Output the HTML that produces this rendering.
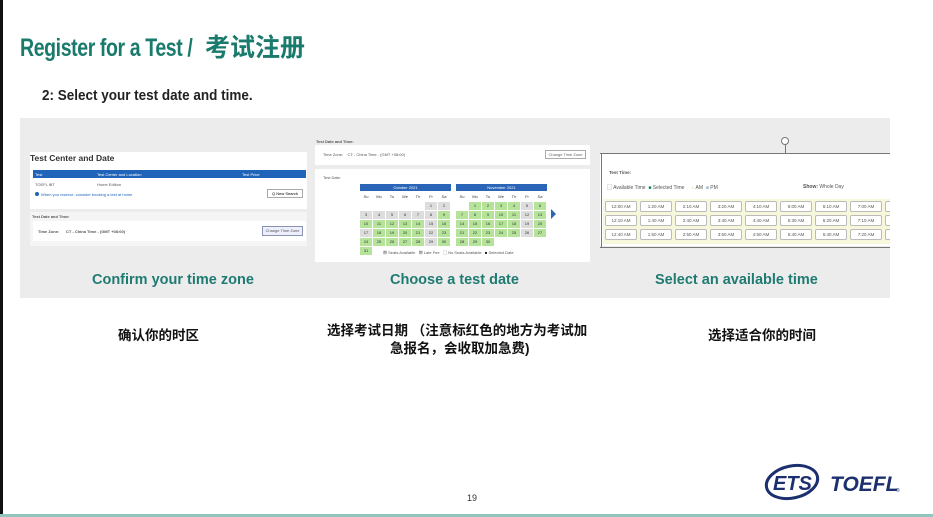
<!DOCTYPE html>
<html><head><meta charset="utf-8"><style>
*{margin:0;padding:0;box-sizing:border-box}
body{width:933px;height:517px;background:#fff;position:relative;overflow:hidden;font-family:"Liberation Sans","Noto Sans CJK SC",sans-serif}
.a{position:absolute}
.title{left:20px;top:28px;color:#1a7a6c;font-weight:bold;font-size:25px;white-space:nowrap}
.title .l{display:inline-block;transform:scaleX(.78);transform-origin:left;width:183px;letter-spacing:-.5px}
.sub{left:42px;top:88px;font-size:14.5px;font-weight:bold;color:#222;transform:scaleX(.93);transform-origin:left;white-space:nowrap}
.panel{left:20px;top:118px;width:870px;height:180px;background:#ececec}
.cap{top:272px;color:#1f7b72;font-weight:bold;font-size:14.5px;white-space:nowrap}
.cn{font-size:13.5px;color:#111;font-weight:bold;white-space:nowrap}
.w{background:#fff}
.tiny{font-size:4px;color:#555;white-space:nowrap}
.cal{display:grid;grid-template-columns:repeat(7,12px);gap:1px}
.cal div{height:8px;font-size:4px;text-align:center;line-height:8px;color:#333}
.g{background:#b5e39a}.y{background:#ddd}.e{background:#fff}
.tb{width:32px;height:11px;border:1px solid #bbb;border-radius:2px;background:#fff;font-size:4.5px;text-align:center;line-height:9px;color:#555}
</style></head><body>
<div class="a" style="left:0;top:0;width:3px;height:517px;background:#111"></div>
<div class="a title"><span class="l">Register for a Test /</span><span style="margin-left:2px">考试注册</span></div>
<div class="a sub">2: Select your test date and time.</div>
<div class="a panel"></div>

<!-- panel1 -->
<div class="a w" style="left:30px;top:152px;width:277px;height:57px"></div>
<div class="a" style="left:30px;top:153px;font-size:8.5px;font-weight:bold;color:#333">Test Center and Date</div>
<div class="a" style="left:33px;top:170px;width:273px;height:8px;background:#1f64b8"></div>
<div class="a tiny" style="left:35px;top:172px;color:#fff">Test</div>
<div class="a tiny" style="left:97px;top:172px;color:#fff">Test Center and Location</div>
<div class="a tiny" style="left:242px;top:172px;color:#fff">Test Price</div>
<div class="a tiny" style="left:35px;top:182px">TOEFL iBT</div>
<div class="a tiny" style="left:97px;top:182px">Home Edition</div>
<div class="a" style="left:35px;top:192px;width:4px;height:4px;border-radius:50%;background:#1f64b8"></div>
<div class="a tiny" style="left:41px;top:192px;color:#1f64b8">When you reserve, consider booking a test at home</div>
<div class="a w" style="left:267px;top:189px;width:36px;height:9px;border:1px solid #aaa;font-size:4px;text-align:center;line-height:7px">Q New Search</div>
<div class="a" style="left:30px;top:212px;width:277px;height:34px;background:#f5f5f5"></div>
<div class="a tiny" style="left:32px;top:214px;font-weight:bold">Test Date and Time:</div>
<div class="a w" style="left:33px;top:221px;width:273px;height:20px"></div>
<div class="a tiny" style="left:38px;top:229px;font-weight:bold">Time Zone:&nbsp;&nbsp;&nbsp;&nbsp;&nbsp; CT - China Time - (GMT +08:00)</div>
<div class="a" style="left:262px;top:226px;width:41px;height:10px;border:1px solid #8893b0;background:#eef;font-size:4px;text-align:center;line-height:8px;color:#555">Change Time Zone</div>
<div class="a cap" style="left:92px">Confirm your time zone</div>

<!-- panel2 -->
<div class="a tiny" style="left:316px;top:139px;font-weight:bold">Test Date and Time:</div>
<div class="a w" style="left:315px;top:145px;width:275px;height:20px"></div>
<div class="a tiny" style="left:323px;top:152px">Time Zone:&nbsp;&nbsp;&nbsp; CT - China Time - (GMT +08:00)</div>
<div class="a w" style="left:545px;top:150px;width:41px;height:9px;border:1px solid #aaa;font-size:4px;text-align:center;line-height:7px;color:#666">Change Time Zone</div>
<div class="a w" style="left:315px;top:169px;width:275px;height:93px"></div>
<div class="a tiny" style="left:323px;top:175px">Test Date:</div>
<div class="a" style="left:360px;top:184px;width:91px;height:7px;background:#2a65b8;color:#fff;font-size:4px;text-align:center;line-height:7px">October 2021</div>
<div class="a" style="left:456px;top:184px;width:91px;height:7px;background:#2a65b8;color:#fff;font-size:4px;text-align:center;line-height:7px">November 2021</div>
<div class="a cal" style="left:360px;top:193px">
<div>Su</div><div>Mo</div><div>Tu</div><div>We</div><div>Th</div><div>Fr</div><div>Sa</div>
<div class="e"></div><div class="e"></div><div class="e"></div><div class="e"></div><div class="e"></div><div class="y">1</div><div class="y">2</div>
<div class="y">3</div><div class="y">4</div><div class="y">5</div><div class="y">6</div><div class="y">7</div><div class="y">8</div><div class="g">9</div>
<div class="g">10</div><div class="g">11</div><div class="g">12</div><div class="g">13</div><div class="g">14</div><div class="y">15</div><div class="g">16</div>
<div class="y">17</div><div class="g">18</div><div class="g">19</div><div class="g">20</div><div class="g">21</div><div class="y">22</div><div class="g">23</div>
<div class="g">24</div><div class="g">25</div><div class="g">26</div><div class="g">27</div><div class="g">28</div><div class="y">29</div><div class="g">30</div>
<div class="g">31</div>
</div>
<div class="a cal" style="left:456px;top:193px">
<div>Su</div><div>Mo</div><div>Tu</div><div>We</div><div>Th</div><div>Fr</div><div>Sa</div>
<div class="e"></div><div class="g">1</div><div class="g">2</div><div class="g">3</div><div class="g">4</div><div class="y">5</div><div class="g">6</div>
<div class="g">7</div><div class="g">8</div><div class="g">9</div><div class="g">10</div><div class="g">11</div><div class="y">12</div><div class="g">13</div>
<div class="g">14</div><div class="g">15</div><div class="g">16</div><div class="g">17</div><div class="g">18</div><div class="y">19</div><div class="g">20</div>
<div class="g">21</div><div class="g">22</div><div class="g">23</div><div class="g">24</div><div class="g">25</div><div class="y">26</div><div class="g">27</div>
<div class="g">28</div><div class="g">29</div><div class="g">30</div>
</div>
<div class="a" style="left:551px;top:209px;width:0;height:0;border-left:5px solid #2a65b8;border-top:5px solid transparent;border-bottom:5px solid transparent"></div>
<div class="a tiny" style="left:383px;top:250px">▩ Seats Available&nbsp;&nbsp; ▩ Late Fee&nbsp;&nbsp; ▢ No Seats Available&nbsp;&nbsp; <span style="color:#113">■</span> Selected Date</div>
<div class="a cap" style="left:390px">Choose a test date</div>

<!-- panel3 -->
<div class="a w" style="left:600px;top:154px;width:290px;height:92px"></div>
<div class="a" style="left:600px;top:153px;width:290px;height:1px;background:#777"></div>
<div class="a" style="left:600px;top:247px;width:290px;height:1px;background:#777"></div>
<div class="a" style="left:601px;top:154px;width:1px;height:93px;background:#777"></div>
<div class="a" style="left:785px;top:140px;width:1px;height:13px;background:#777"></div>
<div class="a" style="left:781px;top:137px;width:8px;height:8px;border:1px solid #777;border-radius:50%;background:#fff"></div>
<div class="a tiny" style="left:609px;top:170px;font-size:4.5px;font-weight:bold">Test Time:</div>
<div class="a tiny" style="left:607px;top:184px;font-size:5px">▢ Available Time&nbsp;&nbsp;<span style="color:#0a7a68">■</span> Selected Time&nbsp;&nbsp;&nbsp;&nbsp;&nbsp;<span style="color:#f4f4d8">■</span> AM&nbsp;&nbsp;<span style="color:#9fb0dc">■</span> PM</div>
<div class="a tiny" style="left:803px;top:184px;font-size:5px"><b>Show:</b> Whole Day</div>
<div class="a" style="left:603px;top:199px;width:287px;height:45px;background:#f7f7dc"></div>
<div class="a" style="left:605px;top:201px;display:grid;grid-template-columns:repeat(9,32px);gap:3px 3px;width:285px;overflow:hidden">
<div class="tb">12:00 AM</div><div class="tb">1:20 AM</div><div class="tb">2:10 AM</div><div class="tb">3:20 AM</div><div class="tb">4:10 AM</div><div class="tb">5:00 AM</div><div class="tb">6:10 AM</div><div class="tb">7:00 AM</div><div class="tb">8</div>
<div class="tb">12:10 AM</div><div class="tb">1:40 AM</div><div class="tb">2:40 AM</div><div class="tb">3:40 AM</div><div class="tb">4:40 AM</div><div class="tb">5:30 AM</div><div class="tb">6:20 AM</div><div class="tb">7:10 AM</div><div class="tb">8</div>
<div class="tb">12:40 AM</div><div class="tb">1:50 AM</div><div class="tb">2:50 AM</div><div class="tb">3:50 AM</div><div class="tb">4:50 AM</div><div class="tb">5:40 AM</div><div class="tb">6:40 AM</div><div class="tb">7:20 AM</div><div class="tb">8</div>
</div>
<div class="a cap" style="left:655px">Select an available time</div>

<div class="a cn" style="left:118px;top:324px">确认你的时区</div>
<div class="a cn" style="left:327px;top:319px;width:270px;overflow:hidden">选择考试日期 （注意标红色的地方为考试加</div>
<div class="a cn" style="left:390px;top:337px">急报名，会收取加急费)</div>
<div class="a cn" style="left:708px;top:324px">选择适合你的时间</div>

<div class="a" style="left:467px;top:493px;font-size:9px;color:#333">19</div>
<svg class="a" style="left:762px;top:461px" width="146" height="42" viewBox="0 0 146 42">
<ellipse cx="30" cy="21" rx="26" ry="16" fill="none" stroke="#1c2f6e" stroke-width="3" transform="rotate(-12 30 21)"/>
<text x="11" y="29" font-family="Liberation Sans" font-weight="bold" font-style="italic" font-size="20" fill="#1c2f6e">ETS</text>
<text x="68" y="30" font-family="Liberation Sans" font-weight="bold" font-style="italic" font-size="21" fill="#1c2f6e">TOEFL</text>
<text x="134" y="31" font-size="5" fill="#1c2f6e">®</text>
</svg>
<div class="a" style="left:0;top:514px;width:933px;height:3px;background:#8fc7c0"></div>
</body></html>
